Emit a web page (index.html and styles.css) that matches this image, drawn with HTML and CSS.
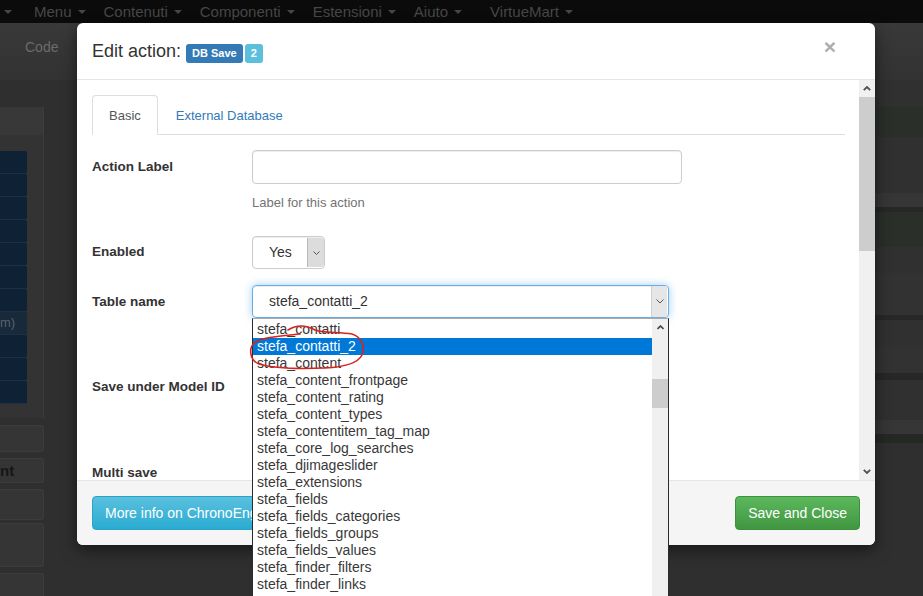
FILE: index.html
```html
<!doctype html>
<html>
<head>
<meta charset="utf-8">
<title>Edit action</title>
<link rel="stylesheet" href="styles.css">
</head>
<body>
    <!-- pagina sotto il modale -->
    <div class="navbar">
        <span class="nav-item"><i class="caret"></i></span>
        <span class="nav-item">Menu<i class="caret"></i></span>
        <span class="nav-item">Contenuti<i class="caret"></i></span>
        <span class="nav-item">Componenti<i class="caret"></i></span>
        <span class="nav-item">Estensioni<i class="caret"></i></span>
        <span class="nav-item">Aiuto<i class="caret"></i></span>
        <span class="nav-item is-wide">VirtueMart<i class="caret"></i></span>
    </div>
    <div class="subbar"><span class="subbar-link">Code</span></div>
    <div class="workspace">
        <aside class="sidebar">
            <div class="side-heading"></div>
            <div class="side-panel">
                <div class="side-btn"></div>
                <div class="side-btn"></div>
                <div class="side-btn"></div>
                <div class="side-btn"></div>
                <div class="side-btn"></div>
                <div class="side-btn"></div>
                <div class="side-btn"></div>
                <div class="side-btn is-text">m)</div>
                <div class="side-btn"></div>
                <div class="side-btn"></div>
                <div class="side-btn"></div>
            </div>
            <div class="side-box h27"></div>
            <div class="side-box h25 is-title">nt</div>
            <div class="side-box h31"></div>
            <div class="side-box h44 tight"></div>
            <div class="side-box h40"></div>
        </aside>
        <main class="stage">
            <div class="band" style="height:27px"></div>
            <div class="band green" style="height:30px"></div>
            <div class="band" style="height:56px"></div>
            <div class="band light" style="height:14px"></div>
            <div class="band dark" style="height:5px"></div>
            <div class="band green" style="height:35px"></div>
            <div class="band" style="height:26px"></div>
            <div class="band mid" style="height:42px"></div>
            <div class="band dark" style="height:5px"></div>
            <div class="band" style="height:27px"></div>
            <div class="band mid" style="height:26px"></div>
            <div class="band dark" style="height:7px"></div>
            <div class="band" style="height:40px"></div>
            <div class="band light" style="height:14px"></div>
            <div class="band darkgreen" style="height:9px"></div>
        </main>
    </div>

    <!-- modale -->
    <div class="modal">
        <div class="modal-header">
            <h4 class="modal-title">Edit action: <span class="badge badge-primary">DB Save</span><span class="badge badge-info">2</span></h4>
            <span class="close">&times;</span>
        </div>
        <div class="modal-body">
            <div class="modal-content">
                <ul class="tabs">
                    <li class="tab active">Basic</li>
                    <li class="tab">External Database</li>
                </ul>

                <div class="form-row">
                    <label class="form-label">Action Label</label>
                    <div class="form-control-wrap">
                        <div class="input"></div>
                        <p class="help">Label for this action</p>
                    </div>
                </div>

                <div class="form-row row-enabled">
                    <label class="form-label small-pad">Enabled</label>
                    <div class="select select-yes">
                        <span class="select-value">Yes</span>
                        <span class="select-arrow">
                            <svg width="7" height="4" viewBox="0 0 7 4"><polyline points="0.5,0.5 3.5,3.5 6.5,0.5" fill="none" stroke="#555" stroke-width="1"/></svg>
                        </span>
                    </div>
                </div>

                <div class="form-row row-table">
                    <label class="form-label">Table name</label>
                    <div class="select select-table is-focused">
                        <span class="select-value">stefa_contatti_2</span>
                        <span class="select-arrow light">
                            <svg width="8" height="5" viewBox="0 0 8 5"><polyline points="0.5,0.5 4,4 7.5,0.5" fill="none" stroke="#555" stroke-width="1"/></svg>
                        </span>
                        <div class="dropdown">
                            <ul class="dropdown-items">
                                <li>stefa_contatti</li>
                                <li class="selected">stefa_contatti_2</li>
                                <li>stefa_content</li>
                                <li>stefa_content_frontpage</li>
                                <li>stefa_content_rating</li>
                                <li>stefa_content_types</li>
                                <li>stefa_contentitem_tag_map</li>
                                <li>stefa_core_log_searches</li>
                                <li>stefa_djimageslider</li>
                                <li>stefa_extensions</li>
                                <li>stefa_fields</li>
                                <li>stefa_fields_categories</li>
                                <li>stefa_fields_groups</li>
                                <li>stefa_fields_values</li>
                                <li>stefa_finder_filters</li>
                                <li>stefa_finder_links</li>
                            </ul>
                            <div class="list-scroll">
                                <span class="list-arrow">
                                    <svg width="7" height="5" viewBox="0 0 7 5"><polyline points="0.5,4 3.5,1 6.5,4" fill="none" stroke="#444" stroke-width="1.6"/></svg>
                                </span>
                                <span class="list-thumb"></span>
                            </div>
                            <svg class="scribble" width="124" height="52" viewBox="246 320 124 52">
                                <path d="M288 330 C296 325 306 325 315 330 C322 333 338 332 352 334 C362 337 365 347 362 355 C358 363 345 367 325 368 C300 369 275 369 259 364 C249 360 249 348 254 343 C262 337 280 336 300 334" fill="none" stroke="#d8231d" stroke-width="1.6" stroke-linecap="round"/>
                            </svg>
                        </div>
                    </div>
                </div>

                <div class="form-row row-model">
                    <label class="form-label">Save under Model ID</label>
                </div>

                <div class="form-row row-multi">
                    <label class="form-label">Multi save</label>
                </div>
            </div>
            <div class="vscroll">
                <span class="vscroll-arrow">
                    <svg width="8" height="5" viewBox="0 0 8 5"><polyline points="0.8,4.2 4,1 7.2,4.2" fill="none" stroke="#505050" stroke-width="1.8"/></svg>
                </span>
                <span class="vscroll-thumb"></span>
                <span class="vscroll-track"></span>
                <span class="vscroll-arrow">
                    <svg width="8" height="5" viewBox="0 0 8 5"><polyline points="0.8,0.8 4,4 7.2,0.8" fill="none" stroke="#505050" stroke-width="1.8"/></svg>
                </span>
            </div>
        </div>
        <div class="modal-footer">
            <span class="btn btn-info">More info on ChronoEngine</span>
            <span class="btn btn-success">Save and Close</span>
        </div>
    </div>
</body>
</html>
```

FILE: styles.css
```css
*{
    margin: 0;
    padding: 0;
    box-sizing: border-box;
}
html, body{
    height: 100%;
    overflow: hidden;
}
body{
    font-family: "Liberation Sans", Arial, sans-serif;
    font-size: 14px;
    color: #333;
    background: #2f2f2f;
}
ul{list-style: none;}

/* barra superiore */
.navbar{
    height: 23px;
    background: #0b0b0b;
    display: flex;
    color: #474747;
    font-size: 15px;
    line-height: 18px;
}
.nav-item{
    display: flex;
    align-items: center;
    padding-right: 18px;
}
.nav-item:first-child{
    padding-left: 4px;
    padding-right: 22px;
}
.nav-item.is-wide{margin-left: 10px;}
.caret{
    width: 0;
    height: 0;
    margin-left: 6px;
    border-top: 4px solid #474747;
    border-left: 4px solid transparent;
    border-right: 4px solid transparent;
}
.nav-item:first-child .caret{margin-left: 0;}

.subbar{
    height: 57px;
    padding: 14px 25px 0;
    background: linear-gradient(#393939, #323232);
    line-height: 20px;
    color: #6b6b6b;
}

/* pagina oscurata */
.workspace{
    display: flex;
}
.sidebar{
    width: 44px;
    padding-top: 27px;
}
.side-heading{
    height: 28px;
    background: #383838;
    border-right: 1px solid #3d3d3d;
}
.side-panel{
    height: 283px;
    padding-top: 16px;
    background: #333;
    border-right: 1px solid #3b3b3b;
}
.side-btn{
    width: 27px;
    height: 23px;
    background: #0f2235;
    border-bottom: 1px solid #1d3145;
    border-radius: 0 2px 2px 0;
    font-size: 13px;
    line-height: 22px;
    color: #56626e;
}
.side-btn.is-text{background: #18293a;}
.side-box{
    margin-top: 6px;
    background: #353535;
    border: 1px solid #3c3c3c;
    border-left: none;
    border-radius: 0 3px 3px 0;
}
.side-box.tight{margin-top: 3px;}
.side-box.h27{height: 27px; margin-top: 7px;}
.side-box.h25{height: 25px;}
.side-box.h31{height: 31px;}
.side-box.h44{height: 44px;}
.side-box.h40{height: 40px;}
.side-box.is-title{
    font-weight: bold;
    font-size: 15px;
    line-height: 23px;
    color: #161616;
}
.stage{
    flex: 1;
    margin-left: 36px;
    display: flex;
    flex-direction: column;
}
.band{background: #303030;}
.band.green{background: #2a2f2a;}
.band.light{background: #363636;}
.band.mid{background: #323232;}
.band.dark{background: #272727;}
.band.darkgreen{background: #242924;}

/* modale */
.modal{
    position: absolute;
    left: 77px;
    top: 23px;
    width: 798px;
    background: #fff;
    border-radius: 6px;
    box-shadow: 0 5px 15px rgba(0,0,0,0.5);
}
.modal-header{
    display: flex;
    height: 57px;
    padding: 15px 15px 0;
    border-bottom: 1px solid #e5e5e5;
}
.modal-title{
    flex: 1;
    font-size: 18px;
    font-weight: normal;
    line-height: 26px;
    color: #333;
}
.badge{
    display: inline-block;
    padding: 3px 6px 4px;
    margin-left: 2px;
    font-size: 11px;
    font-weight: bold;
    line-height: 12px;
    color: #fff;
    border-radius: 3px;
}
.badge-primary{background: #337ab7; margin-left: 0;}
.badge-info{background: #5bc0de;}
.close{
    align-self: flex-start;
    margin: -2px 24px 0 0;
    font-size: 21px;
    font-weight: bold;
    line-height: 21px;
    color: #adadad;
}
.modal-body{
    display: flex;
    height: 400px;
}
.modal-content{
    flex: 1;
    padding: 15px 14px 0 15px;
}
.vscroll{
    width: 16px;
    display: flex;
    flex-direction: column;
    background: #f0f0f0;
}
.vscroll-arrow{
    height: 17px;
    display: flex;
    align-items: center;
    justify-content: center;
}
.vscroll-thumb{
    height: 154px;
    background: #cdcdcd;
}
.vscroll-track{flex: 1;}

.tabs{
    display: flex;
    border-bottom: 1px solid #ddd;
    font-size: 13px;
}
.tab{
    padding: 10px 15px 7px;
    margin-left: 2px;
    line-height: 20px;
    color: #337ab7;
    border: 1px solid transparent;
}
.tab.active{
    margin: 0 0 -1px;
    padding: 10px 16px 7px;
    color: #555;
    background: #fff;
    border-color: #ddd #ddd transparent;
    border-radius: 4px 4px 0 0;
}

.form-row{
    display: flex;
    margin-top: 15px;
}
.form-label{
    width: 160px;
    padding-top: 7px;
    font-size: 13.5px;
    font-weight: bold;
    line-height: 20px;
    color: #333;
}
.form-label.small-pad{padding-top: 6px;}
.row-enabled{margin-top: 25px;}
.row-table{margin-top: 16px;}
.row-model{margin-top: 52px; height: 34px;}
.row-multi{margin-top: 52px;}

.input{
    width: 430px;
    height: 34px;
    border: 1px solid #ccc;
    border-radius: 4px;
    box-shadow: inset 0 1px 1px rgba(0,0,0,0.075);
}
.help{
    margin-top: 10px;
    font-size: 13px;
    line-height: 17px;
    color: #737373;
}

.select{
    position: relative;
    display: flex;
    height: 33px;
    border: 1px solid #ccc;
    border-radius: 4px;
    box-shadow: inset 0 1px 1px rgba(0,0,0,0.075);
}
.select-yes{width: 73px;}
.select-table{width: 417px;}
.select.is-focused{
    border-color: #66afe9;
    box-shadow: inset 0 1px 1px rgba(0,0,0,0.075), 0 0 8px rgba(102,175,233,0.6);
}
.select-value{
    flex: 1;
    padding-left: 16px;
    line-height: 31px;
    color: #333;
}
.select-arrow{
    width: 17px;
    margin: 1px 0;
    display: flex;
    align-items: center;
    justify-content: center;
    background: #dcdcdc;
    border-left: 1px solid #b9b9b9;
    border-radius: 0 3px 3px 0;
}
.select-arrow.light{
    width: 16px;
    margin: 0 1px 0 0;
    background: #e6e6e6;
    border-left-color: #d0d0d0;
    border-radius: 0;
}

/* lista aperta della select */
.dropdown{
    position: absolute;
    left: -1px;
    top: calc(100% + 1px);
    width: 417px;
    height: 300px;
    display: flex;
    background: #fff;
    border: 1px solid #2b2b2b;
    border-top-color: #a9a9a9;
}
.dropdown-items{
    flex: 1;
    padding-top: 2px;
}
.dropdown-items li{
    height: 17px;
    padding-left: 4px;
    line-height: 17px;
    color: #383838;
    white-space: nowrap;
}
.dropdown-items li.selected{
    background: #0078d7;
    color: #fff;
}
.list-scroll{
    width: 16px;
    display: flex;
    flex-direction: column;
    background: #f0f0f0;
}
.list-arrow{
    height: 17px;
    display: flex;
    align-items: center;
    justify-content: center;
}
.list-thumb{
    height: 29px;
    margin-top: 43px;
    background: #cdcdcd;
}
.scribble{
    position: absolute;
    left: -7px;
    top: 1px;
}

.modal-footer{
    display: flex;
    justify-content: space-between;
    padding: 15px;
    background: #f5f5f5;
    border-top: 1px solid #e5e5e5;
    border-radius: 0 0 6px 6px;
}
.btn{
    display: inline-block;
    height: 34px;
    padding: 6px 12px;
    font-size: 14px;
    line-height: 20px;
    color: #fff;
    border: 1px solid transparent;
    border-radius: 4px;
    white-space: nowrap;
}
.btn-info{
    background: linear-gradient(#5bc0de, #2aabd2);
    border-color: #28a4c9;
}
.btn-success{
    background: linear-gradient(#5cb85c, #419641);
    border-color: #3e8f3e;
}
```
